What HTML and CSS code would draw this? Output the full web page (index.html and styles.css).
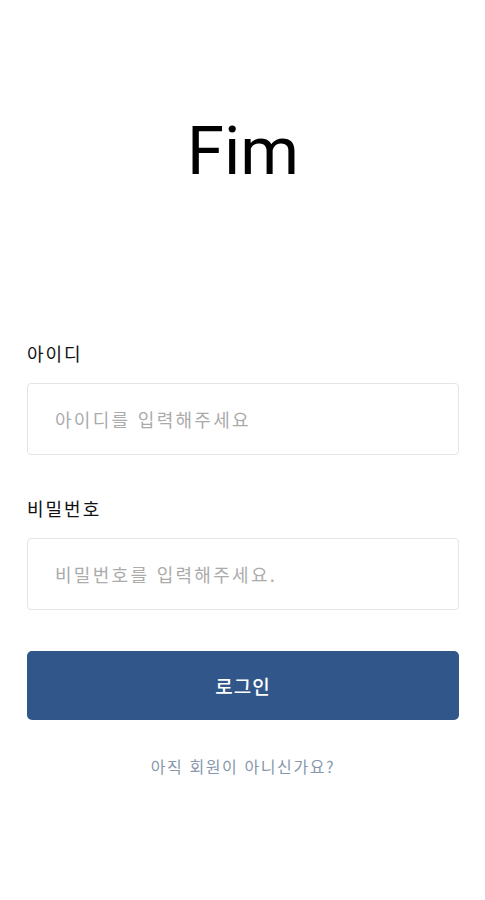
FILE: index.html
```html
<!DOCTYPE html>
<html lang="ko">
<head>
  <meta charset="UTF-8" />
  <meta name="viewport" content="width=device-width, initial-scale=1.0" />
  <title>Fim – 로그인</title>
  <link rel="stylesheet" href="styles.css">
</head>
<body>

  <h1 class="logo">Fim</h1>

  <form class="login-form">
    <label for="userId">아이디</label>
    <input type="text" id="userId" placeholder="아이디를 입력해주세요" />

    <label for="userPw">비밀번호</label>
    <input type="password" id="userPw" placeholder="비밀번호를 입력해주세요." />

    <button type="submit">로그인</button>
  </form>

  <a class="signup" href="#">아직 회원이 아니신가요?</a>

</body>
</html>
```

FILE: styles.css
```css
body {
  margin: 0;
  padding: 0 26px 0 27px;
  font-family: "Noto Sans CJK KR", "Noto Sans", sans-serif;
  background-color: white;
  color: #111;
}
.logo {
  margin: 0;
  padding-top: 111px;
  height: 222px;
  box-sizing: border-box;
  font-family: Roboto, sans-serif;
  font-weight: 400;
  font-size: 67px;
  line-height: 80px;
  text-align: center;
  color: #000;
}
.login-form {
  display: flex;
  flex-direction: column;
  padding-top: 118px;
}
label {
  font-size: 18px;
  line-height: 26px;
  letter-spacing: 2px;
  margin-bottom: 17px;
}
input {
  height: 72px;
  box-sizing: border-box;
  border: 1px solid #e4e4e4;
  border-radius: 4px;
  padding: 0 27px;
  font-family: inherit;
  font-size: 18px;
  letter-spacing: 2.3px;
  margin-bottom: 40px;
}
input::placeholder {
  color: #ababab;
}
button {
  height: 69px;
  margin-top: 1px;
  border: none;
  border-radius: 5px;
  background-color: #30568a;
  color: white;
  font-family: inherit;
  font-size: 19px;
  font-weight: 500;
  letter-spacing: 1px;
  cursor: pointer;
}
.signup {
  display: block;
  margin-top: 34px;
  text-align: center;
  font-size: 16px;
  letter-spacing: 1.6px;
  color: #8797ac;
  text-decoration: none;
}
```
